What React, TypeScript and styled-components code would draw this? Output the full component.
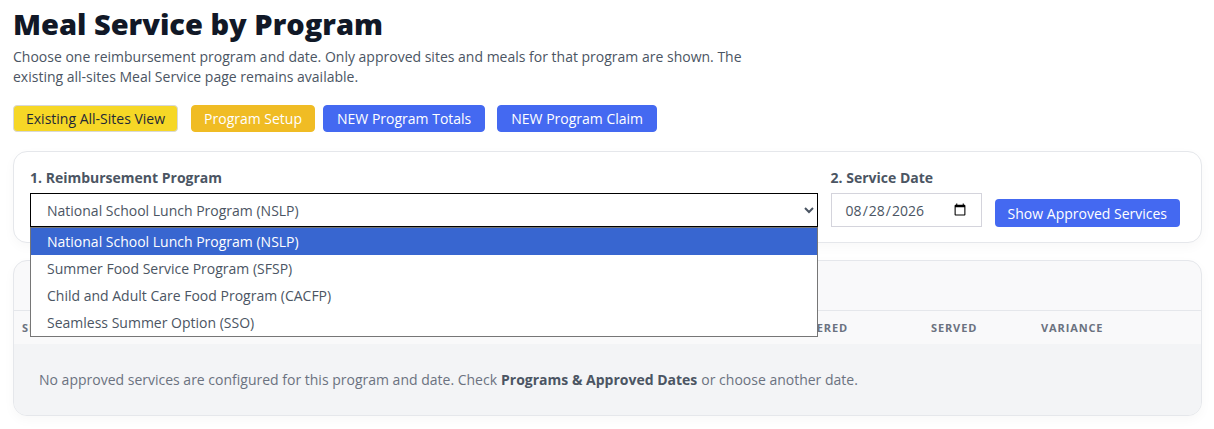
import React from "react";
import styled, { createGlobalStyle } from "styled-components";

const color = {
  INK: "#111827",
  TEXT: "#4b5563",
  MUTED: "#6b7280",
  BORDER: "#e5e7eb",
  YELLOW: "#f6d726",
  AMBER: "#f0bc24",
  BLUE: "#4469f1",
  HIGHLIGHT: "#3866d0",
};

const programs = [
  "National School Lunch Program (NSLP)",
  "Summer Food Service Program (SFSP)",
  "Child and Adult Care Food Program (CACFP)",
  "Seamless Summer Option (SSO)",
];

const columns = ["Site", "Meal", "Delivered", "Served", "Variance"];

type Tone = "yellow" | "amber" | "blue";

export default function App() {
  const [program, setProgram] = React.useState(programs[0]);

  return (
    <>
      <GlobalStyle />
      <Page>
        <Title>Meal Service by Program</Title>
        <Lead>
          Choose one reimbursement program and date. Only approved sites and meals for that program
          are shown. The existing all-sites Meal Service page remains available.
        </Lead>

        <Actions>
          <ActionButton $tone="yellow">Existing All-Sites View</ActionButton>
          <ActionButton $tone="amber">Program Setup</ActionButton>
          <ActionButton $tone="blue">NEW Program Totals</ActionButton>
          <ActionButton $tone="blue">NEW Program Claim</ActionButton>
        </Actions>

        <FilterCard>
          <Field>
            <Label>1. Reimbursement Program</Label>
            <SelectWrap>
              <Select value={program} onChange={(e) => setProgram(e.target.value)}>
                {programs.map((p) => (
                  <option key={p}>{p}</option>
                ))}
              </Select>
              <Listbox>
                {programs.map((p) => (
                  <Option key={p} $active={p === program}>
                    {p}
                  </Option>
                ))}
              </Listbox>
            </SelectWrap>
          </Field>
          <Field>
            <Label>2. Service Date</Label>
            <DateInput type="date" defaultValue="2026-08-28" />
          </Field>
          <ShowButton>Show Approved Services</ShowButton>
        </FilterCard>

        <ResultsCard>
          <ResultsHeader />
          <HeadRow>
            {columns.map((c) => (
              <HeadCell key={c}>{c}</HeadCell>
            ))}
          </HeadRow>
          <Empty>
            No approved services are configured for this program and date. Check{" "}
            <b>Programs &amp; Approved Dates</b> or choose another date.
          </Empty>
        </ResultsCard>
      </Page>
    </>
  );
}

const GlobalStyle = createGlobalStyle`
  * { box-sizing: border-box; }
  body {
    margin: 0;
    background: #ffffff;
    font-family: "Open Sans", "Noto Sans", sans-serif;
    color: ${color.TEXT};
  }
`;

const Page = styled.main`
  padding: 5px 12px 12px 13px;
`;

const Title = styled.h1`
  margin: 0;
  font-size: 29px;
  line-height: 38px;
  font-weight: 800;
  color: ${color.INK};
`;

const Lead = styled.p`
  margin: 4px 0 0;
  max-width: 760px;
  font-size: 14px;
  line-height: 20px;
  color: ${color.TEXT};
`;

const Actions = styled.div`
  display: flex;
  gap: 12px;
  margin-top: 18px;
`;

const toneStyles: Record<Tone, string> = {
  yellow: `background: ${color.YELLOW}; color: #1f2937; border-color: #d8d8d8; margin-right: 1px;`,
  amber: `background: ${color.AMBER}; color: #ffffff; border-color: ${color.AMBER}; margin-right: -4px;`,
  blue: `background: ${color.BLUE}; color: #ffffff; border-color: ${color.BLUE}; padding: 0 13px;`,
};

const ActionButton = styled.button<{ $tone: Tone }>`
  height: 27px;
  padding: 0 12px;
  border: 1px solid;
  border-radius: 4px;
  font-family: inherit;
  font-size: 14px;
  ${({ $tone }) => toneStyles[$tone]}
`;

const FilterCard = styled.section`
  display: grid;
  grid-template-columns: 1fr auto auto;
  align-items: end;
  gap: 13px;
  margin-top: 19px;
  padding: 16px 21px 15px 16px;
  background: #ffffff;
  border: 1px solid ${color.BORDER};
  border-radius: 14px;
  box-shadow: 0 4px 12px rgba(17, 24, 39, 0.03);
`;

const Field = styled.div`
  display: flex;
  flex-direction: column;
  gap: 5px;
`;

const Label = styled.label`
  font-size: 14px;
  line-height: 20px;
  font-weight: 700;
  color: ${color.TEXT};
`;

const SelectWrap = styled.div`
  position: relative;
`;

const Select = styled.select`
  width: 100%;
  height: 34px;
  padding: 0 10px 0 12px;
  border: 1px solid #000000;
  border-radius: 0;
  background: #ffffff;
  font-family: inherit;
  font-size: 14px;
  color: ${color.TEXT};
  outline: none;
`;

const Listbox = styled.ul`
  position: absolute;
  top: 100%;
  left: 0;
  right: 0;
  z-index: 10;
  margin: 0;
  padding: 0;
  list-style: none;
  background: #ffffff;
  border: 1px solid #767676;
`;

const Option = styled.li<{ $active: boolean }>`
  height: 27px;
  line-height: 27px;
  padding-left: 16px;
  font-size: 14px;
  color: ${({ $active }) => ($active ? "#ffffff" : color.TEXT)};
  background: ${({ $active }) => ($active ? color.HIGHLIGHT : "transparent")};
`;

const DateInput = styled.input`
  width: 151px;
  height: 34px;
  padding: 0 12px 0 13px;
  border: 1px solid #d4d4dc;
  border-radius: 0;
  font-family: inherit;
  font-size: 14px;
  color: ${color.TEXT};
`;

const ShowButton = styled.button`
  height: 28px;
  padding: 0 13px;
  border: none;
  border-radius: 4px;
  background: ${color.BLUE};
  color: #ffffff;
  font-family: inherit;
  font-size: 14px;
`;

const ResultsCard = styled.section`
  margin-top: 17px;
  background: #f9f9fa;
  border: 1px solid ${color.BORDER};
  border-radius: 14px;
  overflow: hidden;
  box-shadow: 0 4px 12px rgba(17, 24, 39, 0.03);
`;

const ResultsHeader = styled.header`
  height: 50px;
  border-bottom: 1px solid ${color.BORDER};
`;

const HeadRow = styled.div`
  display: grid;
  grid-template-columns: 1fr 250px 150px 110px 168px;
  height: 33px;
  align-items: center;
  background: #f9f9fa;
`;

const HeadCell = styled.div`
  padding: 0 8px;
  font-size: 11px;
  font-weight: 700;
  letter-spacing: 0.08em;
  text-transform: uppercase;
  color: ${color.MUTED};
`;

const Empty = styled.div`
  height: 71px;
  display: flex;
  align-items: center;
  padding: 0 25px;
  background: #f3f4f6;
  font-size: 14px;
  color: ${color.MUTED};

  b {
    margin: 0 4px;
    font-weight: 700;
    color: ${color.TEXT};
  }
`;
